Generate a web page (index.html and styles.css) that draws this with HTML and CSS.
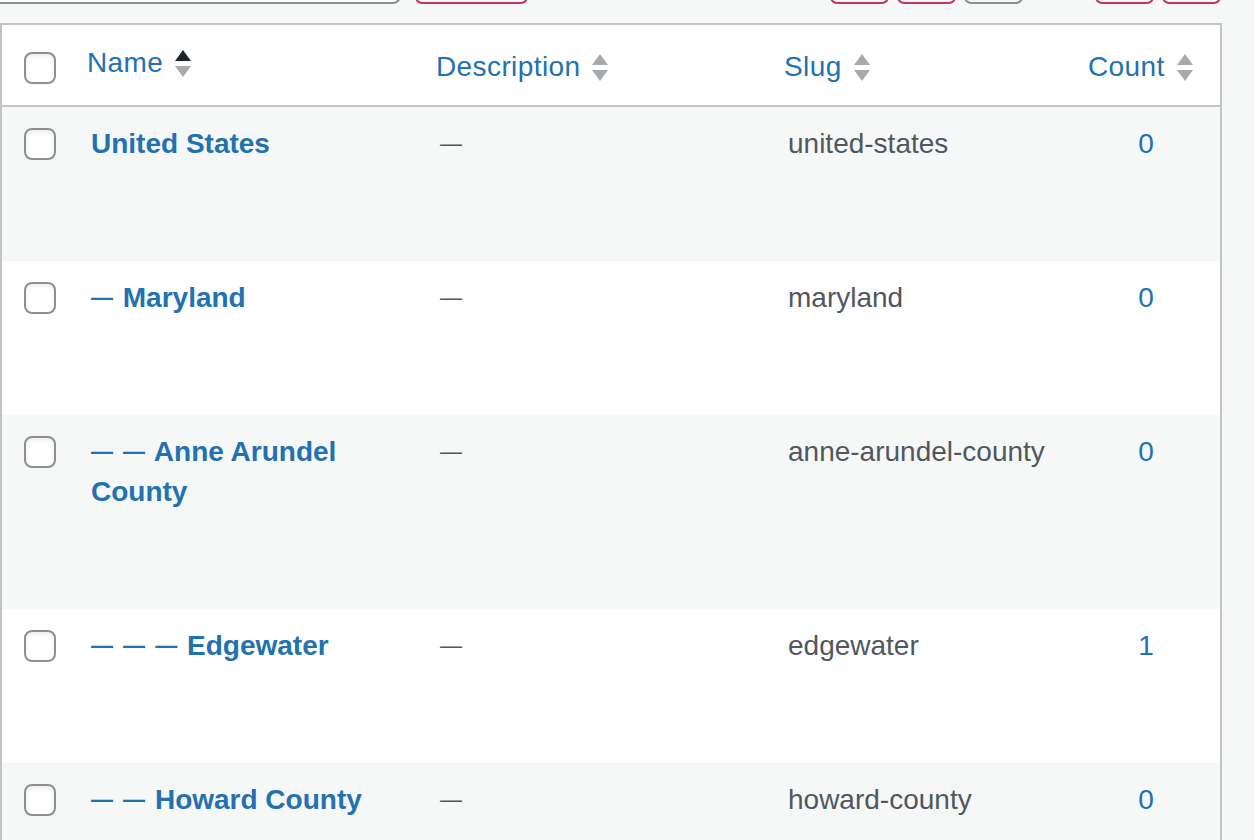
FILE: index.html
```html
<!DOCTYPE html>
<html lang="en">
<head>
<meta charset="utf-8">
<title>Tags</title>
<link rel="stylesheet" href="styles.css">
</head>
<body>
<div class="wrap">
  <div class="tablenav">
    <div class="search-box">
      <span class="search-input" aria-label="Search"></span>
      <button class="btn" aria-label="Search Tags"></button>
    </div>
    <div class="pages">
      <button class="btn" aria-label="First page"></button>
      <button class="btn" aria-label="Previous page"></button>
      <button class="btn btn-gray" aria-label="Current page"></button>
    </div>
    <div class="pages pages-next">
      <button class="btn" aria-label="Next page"></button>
      <button class="btn" aria-label="Last page"></button>
    </div>
  </div>

  <table class="list">
    <colgroup>
      <col class="c-check">
      <col class="c-name">
      <col class="c-desc">
      <col class="c-slug">
      <col class="c-count">
    </colgroup>
    <thead>
      <tr>
        <th class="check"><input type="checkbox" class="cb"></th>
        <th class="sorted"><a class="sort" href="#"><span>Name</span><svg class="ind" viewBox="0 0 18 30" width="18" height="30"><polygon class="up on" points="1,13 17,13 9,2"/><polygon class="down" points="1,18 17,18 9,29"/></svg></a></th>
        <th><a class="sort" href="#"><span>Description</span><svg class="ind" viewBox="0 0 18 30" width="18" height="30"><polygon class="up" points="1,13 17,13 9,2"/><polygon class="down" points="1,18 17,18 9,29"/></svg></a></th>
        <th><a class="sort" href="#"><span>Slug</span><svg class="ind" viewBox="0 0 18 30" width="18" height="30"><polygon class="up" points="1,13 17,13 9,2"/><polygon class="down" points="1,18 17,18 9,29"/></svg></a></th>
        <th><a class="sort" href="#"><span>Count</span><svg class="ind" viewBox="0 0 18 30" width="18" height="30"><polygon class="up" points="1,13 17,13 9,2"/><polygon class="down" points="1,18 17,18 9,29"/></svg></a></th>
      </tr>
    </thead>
    <tbody>
      <tr>
        <td class="check"><input type="checkbox" class="cb"></td>
        <td class="name"><a href="#">United States</a></td>
        <td class="desc"><span class="dash">—</span></td>
        <td class="slug">united-states</td>
        <td class="count"><a href="#">0</a></td>
      </tr>
      <tr>
        <td class="check"><input type="checkbox" class="cb"></td>
        <td class="name"><a href="#"><span class="dash">—</span> Maryland</a></td>
        <td class="desc"><span class="dash">—</span></td>
        <td class="slug">maryland</td>
        <td class="count"><a href="#">0</a></td>
      </tr>
      <tr>
        <td class="check"><input type="checkbox" class="cb"></td>
        <td class="name"><a href="#"><span class="dash">— —</span> Anne Arundel County</a></td>
        <td class="desc"><span class="dash">—</span></td>
        <td class="slug">anne-arundel-county</td>
        <td class="count"><a href="#">0</a></td>
      </tr>
      <tr>
        <td class="check"><input type="checkbox" class="cb"></td>
        <td class="name"><a href="#"><span class="dash">— — —</span> Edgewater</a></td>
        <td class="desc"><span class="dash">—</span></td>
        <td class="slug">edgewater</td>
        <td class="count"><a href="#">1</a></td>
      </tr>
      <tr>
        <td class="check"><input type="checkbox" class="cb"></td>
        <td class="name"><a href="#"><span class="dash">— —</span> Howard County</a></td>
        <td class="desc"><span class="dash">—</span></td>
        <td class="slug">howard-county</td>
        <td class="count"><a href="#">0</a></td>
      </tr>
    </tbody>
  </table>
</div>
</body>
</html>
```

FILE: styles.css
```css
html, body {
  margin: 0;
  padding: 0;
  background: #f6f7f7;
  font-family: "Liberation Sans", Arial, sans-serif;
  color: #50575e;
}

.wrap {
  width: 1222px;
}

.tablenav {
  display: flex;
  height: 60px;
  margin-top: -56px;
  margin-bottom: 19px;
}

.search-box {
  display: flex;
  margin-left: -10px;
}

.search-input {
  display: block;
  width: 411px;
  height: 60px;
  box-sizing: border-box;
  border: 2px solid #8c8f94;
  border-radius: 8px;
  background: #fff;
}

.btn {
  display: block;
  width: 59px;
  height: 60px;
  box-sizing: border-box;
  padding: 0;
  border: 2px solid #c4355f;
  border-radius: 7px;
  background: #f6f7f7;
}

.search-box .btn {
  width: 113px;
  margin-left: 14px;
}

.btn-gray {
  border-color: #8c8f94;
}

.pages {
  display: flex;
  gap: 8px;
  margin-left: auto;
}

.pages-next {
  margin-left: 72px;
  margin-right: 1px;
}

.list {
  width: 1222px;
  box-sizing: border-box;
  table-layout: fixed;
  border-collapse: separate;
  border-spacing: 0;
  border: 2px solid #c3c4c7;
  background: #fff;
  font-size: 28px;
}

.c-check { width: 69px; }
.c-name { width: 349px; }
.c-desc { width: 348px; }
.c-slug { width: 304px; }
.c-count { width: 148px; }

thead th {
  text-align: left;
  font-weight: 400;
  padding: 22px 16px 18px;
  line-height: 40px;
  vertical-align: top;
  border-bottom: 2px solid #c3c4c7;
  background: #fff;
}

thead th.sorted {
  padding-top: 18px;
  padding-bottom: 22px;
}

thead th.check {
  padding: 27px 0 0 22px;
}

.sort {
  display: inline-flex;
  align-items: center;
  gap: 11px;
  color: #2271b1;
  text-decoration: none;
}

.sort span {
  line-height: 40px;
  letter-spacing: 0.4px;
}

.ind {
  display: block;
}

.ind polygon {
  fill: #a7aaad;
}

.ind polygon.on {
  fill: #1d2327;
}

.cb {
  -webkit-appearance: none;
  appearance: none;
  display: block;
  width: 32px;
  height: 32px;
  margin: 0;
  box-sizing: border-box;
  border: 2px solid #8c8f94;
  border-radius: 8px;
  background: #fff;
  box-shadow: inset 0 2px 4px rgba(0, 0, 0, 0.08);
}

tbody tr:nth-child(odd) td {
  background: #f6f7f7;
}

tbody tr:nth-child(even) td {
  background: #fff;
}

tbody td {
  padding: 17px 20px 97px;
  line-height: 40px;
  vertical-align: top;
  color: #50575e;
}

tbody td.check {
  padding: 21px 0 0 22px;
}

td.name a {
  color: #2271b1;
  font-weight: 700;
  text-decoration: none;
}

.dash {
  font-size: 22px;
  margin-right: 2px;
  word-spacing: 4px;
  vertical-align: 2px;
}

td.desc .dash {
  margin-right: 0;
}

td.count {
  text-align: center;
}

td.count a {
  color: #2271b1;
  text-decoration: none;
}
```
